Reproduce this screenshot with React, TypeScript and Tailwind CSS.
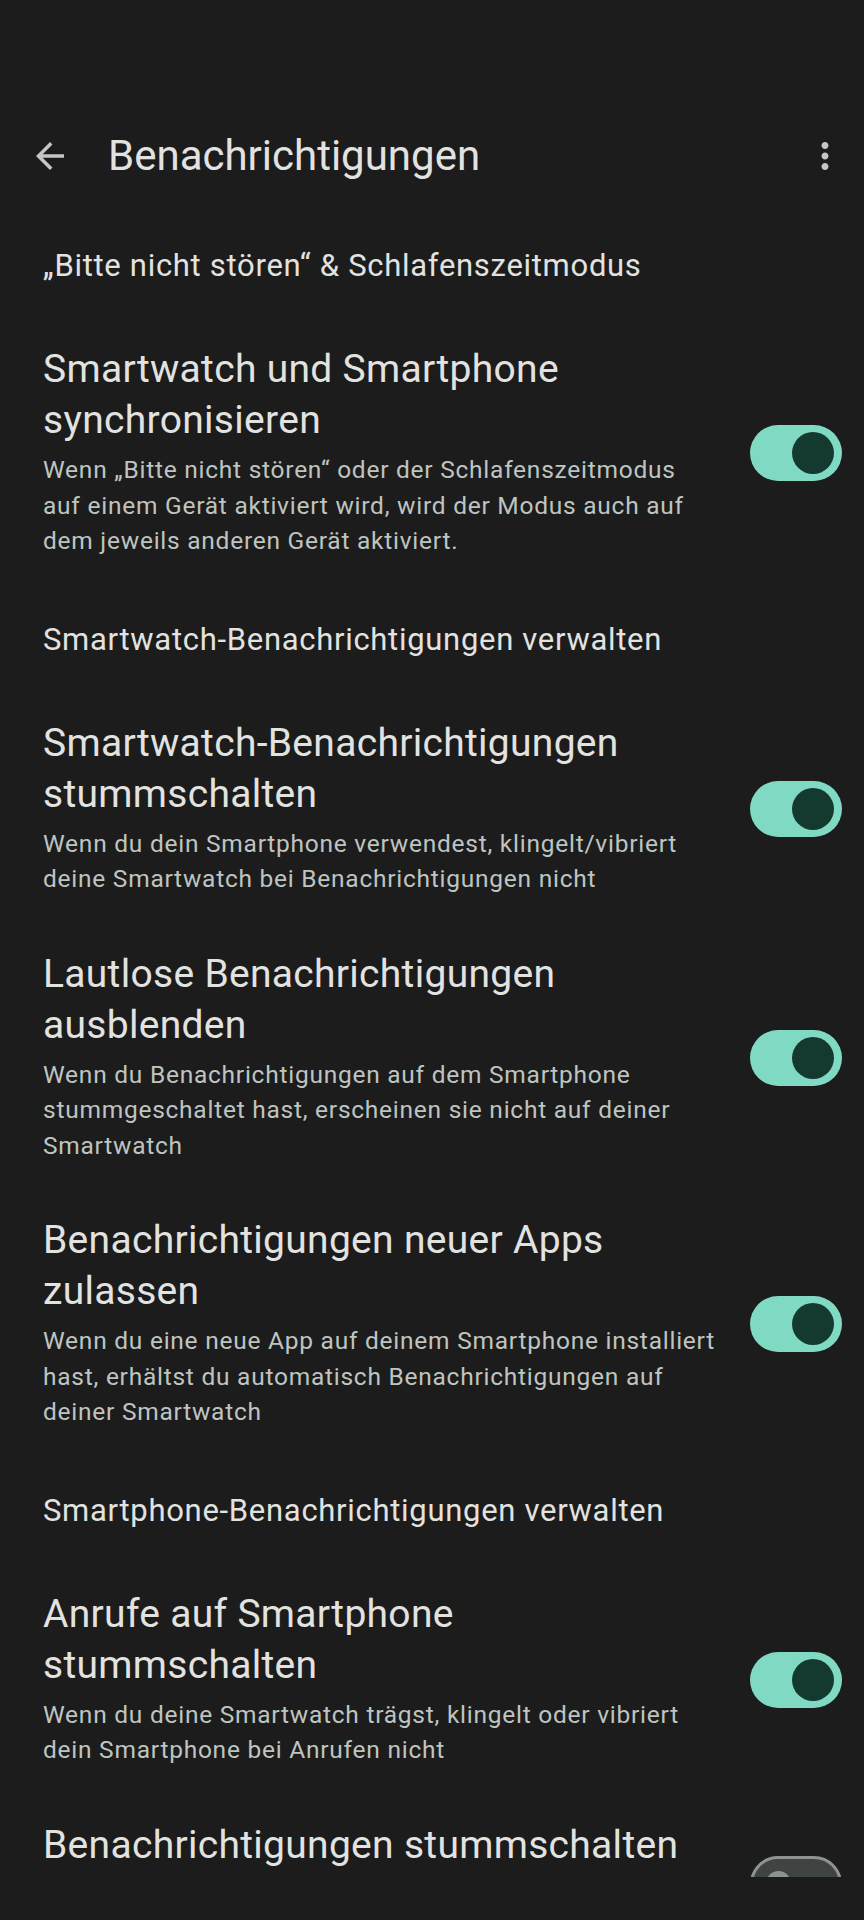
import React from "react";

type Item = {
  title: string;
  summary: string[];
  on: boolean;
};

type Section = {
  header: string;
  items: Item[];
};

// summary lines are broken where the device broke them
const sections: Section[] = [
  {
    header: "„Bitte nicht stören“ & Schlafenszeitmodus",
    items: [
      {
        title: "Smartwatch und Smartphone synchronisieren",
        summary: [
          "Wenn „Bitte nicht stören“ oder der Schlafenszeitmodus",
          "auf einem Gerät aktiviert wird, wird der Modus auch auf",
          "dem jeweils anderen Gerät aktiviert.",
        ],
        on: true,
      },
    ],
  },
  {
    header: "Smartwatch-Benachrichtigungen verwalten",
    items: [
      {
        title: "Smartwatch-Benachrichtigungen stummschalten",
        summary: [
          "Wenn du dein Smartphone verwendest, klingelt/vibriert",
          "deine Smartwatch bei Benachrichtigungen nicht",
        ],
        on: true,
      },
      {
        title: "Lautlose Benachrichtigungen ausblenden",
        summary: [
          "Wenn du Benachrichtigungen auf dem Smartphone",
          "stummgeschaltet hast, erscheinen sie nicht auf deiner",
          "Smartwatch",
        ],
        on: true,
      },
      {
        title: "Benachrichtigungen neuer Apps zulassen",
        summary: [
          "Wenn du eine neue App auf deinem Smartphone installiert",
          "hast, erhältst du automatisch Benachrichtigungen auf",
          "deiner Smartwatch",
        ],
        on: true,
      },
    ],
  },
  {
    header: "Smartphone-Benachrichtigungen verwalten",
    items: [
      {
        title: "Anrufe auf Smartphone stummschalten",
        summary: [
          "Wenn du deine Smartwatch trägst, klingelt oder vibriert",
          "dein Smartphone bei Anrufen nicht",
        ],
        on: true,
      },
      {
        // summary lies below the screen edge
        title: "Benachrichtigungen stummschalten",
        summary: [],
        on: false,
      },
    ],
  },
];

const Toggle = ({ on }: { on: boolean }) =>
  on ? (
    <div className="mt-[4px] flex h-[56px] w-[92px] shrink-0 items-center justify-end rounded-full bg-[#80d9c3] pr-[8px]">
      <div className="h-[42px] w-[42px] rounded-full bg-[#143a30]" />
    </div>
  ) : (
    <div className="flex h-[56px] w-[92px] shrink-0 items-center rounded-full border-[3px] border-[#8e9290] bg-[#3f4442] pl-[13px]">
      <div className="h-[25px] w-[25px] rounded-full bg-[#8e9290]" />
    </div>
  );

const Row = ({ item }: { item: Item }) => (
  <div className="flex items-center py-[26px] pl-[43px] pr-[22px]">
    <div className="min-w-0 flex-1 pr-[24px]">
      <div className="text-[39px] leading-[51px] tracking-[0.3px] text-[#e2e3e1]">{item.title}</div>
      {item.summary.length > 0 ? (
        <div className="mt-[6px] text-[24.5px] leading-[35.5px] tracking-[0.75px] text-[#bfc4c1]">
          {item.summary.map((l) => (
            <div key={l} className="whitespace-nowrap">
              {l}
            </div>
          ))}
        </div>
      ) : (
        <div className="mt-[6px] h-[71px]" />
      )}
    </div>
    <Toggle on={item.on} />
  </div>
);

export default function App() {
  return (
    <div className="min-h-screen bg-[#1b1c1b] font-['Roboto',sans-serif]">
      <div className="h-[1877px] overflow-hidden">
        <div className="h-[100px]" />
        <div className="flex h-[111px] items-center pl-[29px] pr-[18px]">
          <svg width="42" height="42" viewBox="0 0 24 24" fill="#c4c8c5">
            <path d="M20 11H7.83l5.59-5.59L12 4l-8 8 8 8 1.41-1.41L7.83 13H20v-2z" />
          </svg>
          <div className="ml-[37px] flex-1 text-[42px] text-[#e2e3e1]">Benachrichtigungen</div>
          <svg width="42" height="42" viewBox="0 0 24 24" fill="#c4c8c5">
            <path d="M12 8c1.1 0 2-.9 2-2s-.9-2-2-2-2 .9-2 2 .9 2 2 2zm0 2c-1.1 0-2 .9-2 2s.9 2 2 2 2-.9 2-2-.9-2-2-2zm0 6c-1.1 0-2 .9-2 2s.9 2 2 2 2-.9 2-2-.9-2-2-2z" />
          </svg>
        </div>
        {sections.map((s) => (
          <div key={s.header}>
            <div className="pl-[43px] pr-[22px] pt-[37px] pb-[34px] text-[31px] leading-[36px] tracking-[0.7px] text-[#e2e3e0]">
              {s.header}
            </div>
            {s.items.map((it) => (
              <Row key={it.title} item={it} />
            ))}
          </div>
        ))}
      </div>
    </div>
  );
}
